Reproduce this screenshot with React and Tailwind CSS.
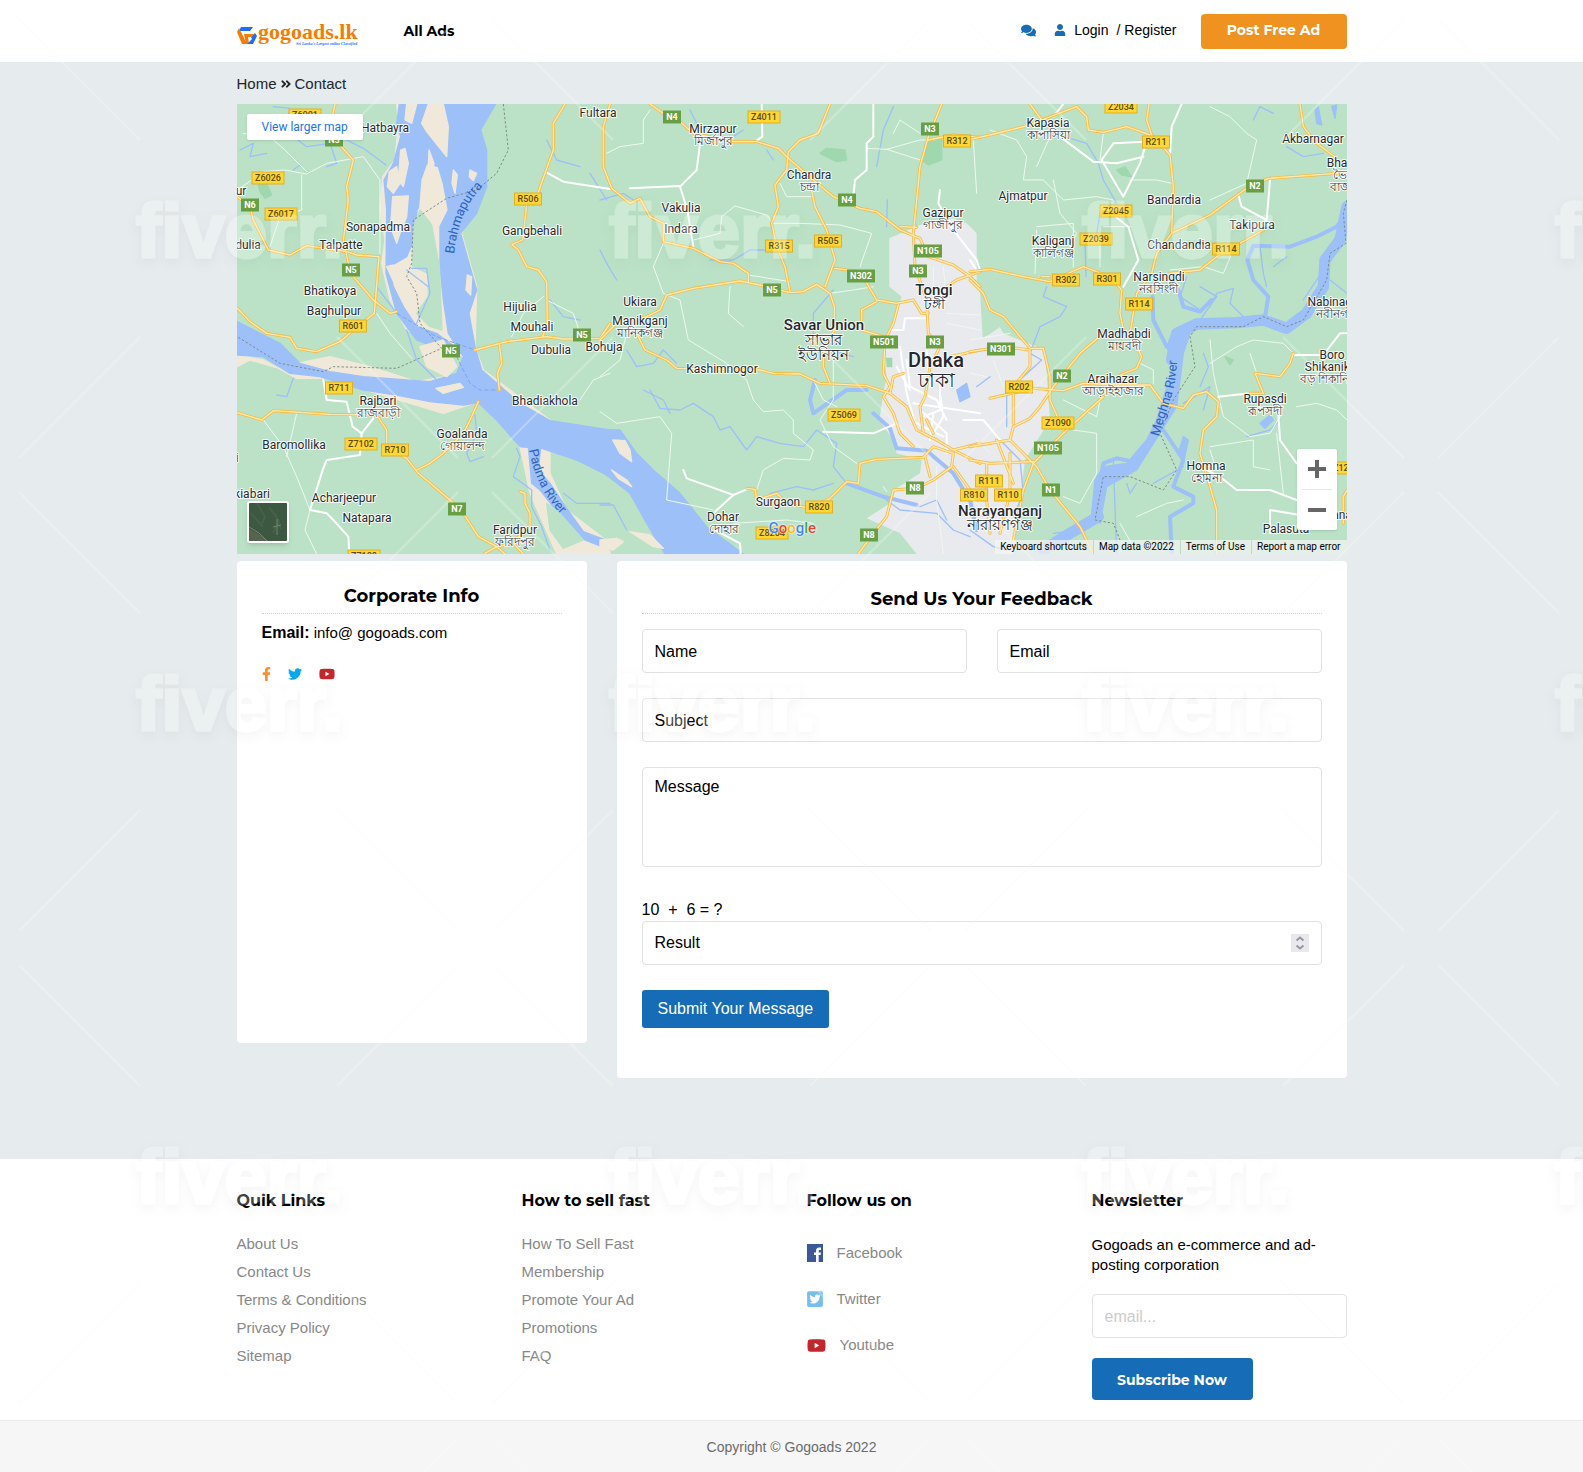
import React from "react";
import {
  FaAngleDoubleRight,
  FaComments,
  FaFacebookF,
  FaTwitter,
  FaTwitterSquare,
  FaUser,
  FaYoutube,
} from "react-icons/fa";

const heading = "font-['Montserrat',Inter,sans-serif]";

/* ---------- Map data: three tiles, each drawn in thirds of a pixel ---------- */

const tiles = [
  {
    id: "west",
    x: -7,
    sand: [
      "M500 12 505 70 495 180 458 230 450 330 465 420 455 490 480 600 530 690 700 770 700 820 560 845 420 800 300 770 200 790 240 820 640 940 760 900 830 980 872 1045 960 1045 960 1120 1010 1230 1140 1330 1140 1362 980 1362 900 1180 870 1040 960 960 760 810 735 740 740 560 695 400 770 250 750 90 795 12Z",
      "M22 765 100 780 200 835 300 835 200 820 60 780 22 800Z",
    ],
    water: [
      "M508 12 500 70 512 110 490 190 462 240 470 330 468 520 500 640 560 720 660 762 700 760 620 700 560 680 520 620 490 560 478 500 530 470 560 400 565 330 572 240 590 190 625 200 640 250 655 330 630 380 630 500 640 600 655 700 700 770 680 820 600 845 400 830 300 815 210 790 150 730 22 665 22 765 100 770 180 820 270 830 400 870 500 885 600 905 700 915 745 908 800 960 870 1040 935 1045 1040 1080 1140 1130 1140 990 960 962 870 910 755 810 735 740 717 640 740 570 720 500 692 400 740 340 770 260 770 150 752 90 797 12Z",
      "M895 1040 932 1042 925 1110 960 1150 1010 1225 1060 1295 1140 1325 1140 1350 1040 1310 985 1240 930 1170 905 1150Z",
    ],
    islands: [
      "M512 150 525 145 535 190 520 260 505 240Z",
      "M478 215 500 200 510 250 490 280 472 260Z",
      "M488 290 535 288 530 350 510 400 500 430 482 380Z",
      "M575 70 595 12 640 12 655 80 650 170 590 95Z",
      "M597 150 612 190 605 225 595 200Z",
      "M612 260 625 250 628 300 615 310Z",
      "M670 210 682 225 675 280 666 250Z",
      "M720 210 740 220 730 242 718 230Z",
      "M712 525 725 530 722 585 708 570Z",
      "M618 865 690 850 700 862 640 880Z",
      "M530 12 560 12 545 70 525 60Z",
      "M565 330 600 300 625 400 600 460 560 400Z",
      "M470 500 490 495 525 560 520 580 505 575Z",
      "M570 740 640 720 680 800 650 830 590 800Z",
    ],
    green: [
      "M570 330 605 375 628 500 636 690 600 680 560 640 595 590 595 520 548 500 550 380Z",
      "M950 1210 990 1240 1060 1320 1000 1345 960 1290Z",
    ],
    park: ["M85 255 110 250 125 285 105 295 90 275Z"],
    streams: [
      "M330 110 400 145 468 195M130 20 180 25 165 90 230 140 300 130 320 190 290 200M30 150 70 130 60 170 110 160M210 195 190 210",
      "M530 510 595 560M545 505 590 505 600 580 560 670M440 560 500 640M530 690 560 780 620 840M860 1045 870 1070 850 1130 905 1170 905 1220 935 1280 960 1350",
      "M735 945 740 1000 710 1060 720 1085 760 1070M960 600 1000 650 1050 660M1080 220 1130 300M950 120 980 180 1050 200M190 835 170 890 140 885M1000 1180 1040 1210 1140 1210",
    ],
    white: [
      "M945 215 1000 245 1140 267M280 840 290 900 350 905 368 980 395 1000 390 1065 290 1080 278 1110 240 1230 290 1240 310 1260 355 1310 358 1362M395 1000 430 955",
    ],
    thin: [
      "M100 960 160 1040 200 1130 240 1230 225 1290 260 1362M22 270 100 215 165 210 230 222 290 190 400 170 450 240 450 460M215 225 215 330 150 350 120 440M230 215 165 150 130 120 40 100M440 640 480 700 545 775M950 600 1030 640 1050 700M1050 900 1090 840 1140 820M940 590 880 640 845 710M170 1070 200 940",
    ],
    roads: [
      "M315 12 305 60 320 125 370 180 350 260 355 300 340 420 355 490 370 530 430 600 480 640 500 635",
      "M22 290 60 320 70 360 115 450 180 465 230 437 350 455 380 465 447 470 433 640 370 690 330 725 260 755 200 745 180 712 110 700 60 665 22 625",
      "M1005 12 970 70 970 150 945 220 920 290 890 315 878 420 845 433 865 450 890 500 925 510 950 545 952 670 938 710",
      "M735 750 830 725 950 710 1000 717 1110 715 1140 670",
      "M808 730 815 790 803 820 808 870",
      "M745 905 720 960 700 1000 640 1060 600 1090 560 1110",
      "M22 938 95 960 130 932 300 943 440 945 470 990 470 1040 530 1075 565 1120 660 1200 700 1240 745 1310 800 1340 825 1362M800 1340 765 1360M800 1340 850 1330 880 1362",
      "M870 1175 885 1180 885 1210 900 1240 900 1290 850 1320",
    ],
    border: [
      "M820 12 835 150 800 220 740 270 650 295 550 360 545 490 530 530 560 580 570 670 635 745 500 805 310 800 280 815 150 790 22 710",
    ],
    ferry: ["M500 640 620 710 735 750M670 750 720 850 750 870 808 870"],
  },
  {
    id: "centre",
    x: 363,
    city: "M868 415 960 375 1060 355 1100 370 1130 400 1130 560 1210 700 1335 750 1350 960 1275 1080 1240 1362 950 1362 900 1300 800 1255 870 1210 890 1165 960 1120 965 1080 890 1060 880 1020 838 960 850 880 860 830 850 760 870 690 905 590 868 560Z",
    green: ["M1140 540 1150 530 1210 620 1240 650 1170 700 1150 710Z"],
    park: ["M985 120 1025 115 1025 180 985 195 965 180Z", "M680 145 735 150 740 180 710 185 660 160Z", "M860 775 875 775 875 800 862 800Z"],
    sand: [],
    water: [
      "M0 990 60 990 110 1060 160 1110 240 1180 320 1280 430 1362 195 1362 140 1270 90 1180 0 1110Z",
      "M1070 870 1100 850 1110 890 1080 905Z",
    ],
    islands: ["M38 1020 75 1022 90 1050 95 1085 60 1060Z", "M35 1110 80 1140 95 1160 55 1135Z", "M90 1295 150 1305 190 1345 160 1340Z", "M0 1320 50 1315 70 1325 40 1350 0 1345Z"],
    streams: [
      "M150 870 180 925 240 930 280 910 340 950 360 990 390 980 440 1050 470 1010 540 1030 610 1040 650 990 710 1030 700 1100 740 1150",
      "M80 750 110 800 160 790 190 750 230 790M130 870 190 900 210 940M0 300 70 280 100 300M270 30 310 110 400 110 430 90M500 150 520 180M0 450 20 490 50 540M330 480 400 480 450 450 500 450M880 20 850 90 830 200M860 380 862 300",
      "M510 1180 590 1160 640 1170 700 1150M760 1160 840 1185 900 1230 1010 1240 1060 1290 1110 1310M960 1220 1010 1200 1040 1260M0 1215 40 1215 80 1290",
      "M700 570 640 640 640 700 690 750 760 770",
    ],
    river: ["M645 840 630 900 640 940 740 870 800 870", "M820 940 870 985 890 1045 980 1052 1060 1120 1110 1200 1130 1290", "M740 1150 850 1190 950 1215"],
    white: [
      "M300 130 290 210 240 260 262 330 280 440M485 12 487 110 470 122M820 12 820 110 800 130 800 210 765 240 760 290M560 170 600 205M1020 270 1015 310 1060 390 1130 480 1140 510M250 1110 260 1135 330 1160 400 1185 440 1168M400 1185 345 1235M345 1290 420 1330 422 1362M90 265 240 258",
      "M870 690 910 690 915 655 980 655M900 740 920 880 950 990M890 800 930 870M920 780 930 860 1010 900 1040 960M960 930 1040 1000 1040 1060M1020 880 1030 950 1000 1000M940 910 1140 940M1090 960 1140 960M970 950 1020 930M950 970 1030 1010M1000 940 990 1020M670 995 820 1000 890 970M1020 850 1020 920M980 750 990 860",
    ],
    thin: [
      "M190 430 160 500 190 580 240 600 265 720 380 790 440 840 460 900 490 935 550 930 580 960 580 1000 640 1050 630 1080 550 1075 490 1110 470 1170M0 935 50 970 180 950 215 1000 200 1200 340 1230M20 160 60 140 130 130 130 60 150 30M280 420 360 400 365 350 405 318 500 345 520 370 600 370 720 375 815 400 780 500M800 145 860 148 960 180M860 148 960 120 1000 120M390 560 385 640 430 680M540 250 560 290 640 290M445 525 570 545M0 830 60 780 80 700M690 580 760 570 820 560M700 750 700 900 660 960 700 1040 770 1090M850 1160 860 1175M400 1270 560 1260 640 1270M960 100 900 60 880 100M1040 640 1140 645M1040 670 1140 690M1000 500 1000 600M1030 500 1040 600M1010 1100 1010 1200 1030 1362M640 840 670 900 710 920",
    ],
    roads: [
      "M30 12 10 80 10 200 35 265 90 310 120 295 150 350 190 370 190 425 280 445 360 485 400 490 445 520 445 545",
      "M0 720 50 670 140 650 180 630 200 585 280 565 420 543 480 555 570 578 610 575 650 553 690 580 703 620 703 690 670 760 670 800 690 850",
      "M150 12 190 40 240 65 280 100 400 125 470 125 535 145 560 170 640 240 700 290 780 325 830 335 900 390 960 415 985 470 1060 495 1110 530 1140 560",
      "M690 12 655 100 600 120 565 155 560 210 525 255 535 320 515 370 530 440 555 500 570 575",
      "M635 270 645 320 680 390 705 480 675 560M705 505 780 515 830 600 890 610 940 600 965 640 985 640",
      "M830 605 785 630 785 690 850 710M895 615 880 670 855 720 850 820 870 860 850 890 880 940 900 1000 940 1040",
      "M110 700 135 750 200 780 230 805 480 810 520 820 600 822 660 850 800 857 870 880 920 920 950 990 1010 1020 1060 1050 1140 1090",
      "M1025 12 985 110 960 200 940 400 945 500 980 600 985 700 1020 740 990 800 975 890 960 920 970 1000 1010 1020M985 120 1060 105 1140 112M900 380 950 382",
      "M440 1165 465 1168 470 1200 530 1180 560 1210 630 1225 690 1195 740 1145 775 1150 780 1090 830 1078 970 1072 1000 1040 1060 1060 1055 1100 1000 1140 950 1165 880 1170 860 1250 820 1300 775 1362",
      "M975 1070 990 1130M1060 1100 1110 1170M1060 1050 1140 1030M1040 560 1070 540 1140 515M1050 770 1140 750M870 880 880 830 910 820M980 960 1000 1000",
    ],
    border: [],
    ferry: [],
  },
  {
    id: "east",
    x: 733,
    sand: [],
    park: ["M440 210 465 200 485 230 455 225Z", "M765 770 790 780 780 795Z"],
    water: ["M1035 30 1045 20 1055 75 1040 70ZM1085 20 1100 15 1095 55ZM870 970 900 945 910 960 885 985ZM640 1010 655 1020 640 1090 625 1060Z", "M610 690 590 740 612 790 560 960 530 1020 470 1090 400 1100 375 1140 365 1240 390 1270 410 1160 500 1110 620 920 640 760 660 700Z"],
    islands: [],
    big: [
      "M1131 320 1110 420 1065 480 1060 560 1010 640 950 685 880 660 800 668 680 672 620 700 605 780",
      "M385 1250 300 1300 220 1350",
    ],
    river: [
      "M1131 340 1100 380 1040 410 960 440 850 437 832 480 850 540 895 590 885 650",
      "M548 590 550 660 590 740M625 570 640 620 690 635 725 600",
      "M395 1120 400 1090 440 1075 490 1085M580 990 640 1080 610 1160 670 1190 670 1210 600 1250 605 1362",
    ],
    streams: [
      "M250 100 350 130 385 190 400 240 440 310 390 340 380 400 345 420 348 530M230 560 220 590 290 620 270 650 210 680 180 760 215 780 160 830 110 870 110 980M650 530 630 590 690 630M1080 540 1131 580M720 620 740 580 790 565 780 610 830 660M690 660 740 590 690 560M640 910 720 860 700 930M1000 600 1060 510M850 60 870 20 910 40M950 140 1000 170 1060 160M870 440 880 520 890 560M910 500 950 470M550 1150 640 1100M470 1150 480 1180 500 1150M830 1010 900 990 930 960M700 760 715 800 690 860M430 1080 440 1362M250 1300 330 1290 370 1362",
      "M90 1020 150 1080 160 1180 130 1250M0 1290 70 1340 110 1350M20 860 60 830",
    ],
    white: [
      "M600 165 605 80 635 12M270 110 370 185 440 190 520 170M525 125 430 130 395 180 460 290 510 190 530 125M430 345 475 380 505 480 460 560M805 285 815 320 890 360 900 240M970 765 1060 765 1110 700 1131 700M690 1100 750 1130 800 1170 900 1170 980 1200M925 940 930 1020 980 1090M745 890 840 880M900 1300 900 1230 990 1245M0 960 40 960 90 1020M0 480 20 510M250 50 280 12",
    ],
    thin: [
      "M60 90 140 120 170 170 160 240 220 240 280 300 380 290 430 300M250 240 270 340 320 400 300 440M400 100 390 180M240 110 200 200M480 240 560 240 605 250M720 20 780 50 830 100 860 120 830 250 720 300M200 380 310 370 310 500M200 390 195 520M390 400 390 500M400 380 480 380M600 510 700 500 760 520 790 450M720 720 730 820 760 950 840 1010 900 1000 930 950M720 790 800 740 850 720 940 730 970 760M840 760 860 820M720 1040 850 1020 850 1100 900 1110M720 1050 740 1110M980 920 1040 910 1100 930 1131 960M920 1000 940 1180M280 900 380 950 390 900M500 1250 590 1210 640 1200M450 1270 490 1340M310 990 380 1000 380 1120 330 1210 280 1190M510 790 550 810 550 850",
      "M10 120 20 280M0 720 120 700M20 1020 60 1060M70 780 100 860M0 820 50 830",
    ],
    roads: [
      "M0 118 60 105 180 75 215 60 180 12M215 60 320 20 350 50 355 90 400 97 470 80 540 105",
      "M537 12 530 60 545 105 600 165 610 260 605 400 560 460 545 520 500 580 480 700",
      "M605 400 720 345 830 265 895 235 1131 218M990 12 1000 80 1040 130 1100 175",
      "M480 700 515 770 500 805 450 825 440 855 540 855 580 910 640 925 670 885 710 875 745 905 740 950 700 990 690 1060 720 1160 740 1230 740 1362",
      "M880 390 740 470 690 510 600 520M0 515 60 508 160 530 240 545 340 500 420 530 455 570 450 640 460 690",
      "M400 700 330 760 250 860 210 920 180 955 130 980 120 1020 200 1100 240 1170 330 1280 370 1362",
      "M0 540 40 580 60 630 100 650 180 745 220 745 240 830 240 900 280 990M0 755 100 740 180 750 180 800 130 860 130 970",
      "M400 890 280 1000 190 1090 160 1170 130 1320M60 895 190 865 280 872 340 850 440 855",
      "M0 1040 120 1020M0 1080 60 1090 190 1085M50 1090 50 1200 60 1300M120 1060 120 1180 90 1300M80 1020 130 1150M1120 1270 1120 1190 1131 1170",
      "M970 760 960 790 930 830 855 820 880 880 840 880M215 530 240 530",
    ],
    border: [
      "M1131 300 1120 340 1128 430 1080 460 1070 540 1000 660 950 680 880 650 820 680 680 680 660 710 675 800 610 900 570 1000 620 1110 580 1170 480 1130 400 1130 375 1260 430 1270 450 1320",
    ],
    ferry: [],
  },
];

/* Each label: tile index, centre x, centre y, text */
const places = [
  [0, 466, 84, "Hatbayra"],
  [0, 32, 273, "ur"],
  [0, 54, 435, "dulia"],
  [0, 443, 381, "Sonapadma"],
  [0, 334, 435, "Talpatte"],
  [0, 301, 573, "Bhatikoya"],
  [0, 312, 633, "Baghulpur"],
  [0, 905, 393, "Gangbehali"],
  [0, 871, 621, "Hijulia"],
  [0, 907, 681, "Mouhali"],
  [0, 962, 750, "Dubulia"],
  [0, 1122, 742, "Bohuja"],
  [0, 944, 903, "Bhadiakhola"],
  [0, 445, 903, "Rajbari"],
  [0, 697, 1002, "Goalanda"],
  [0, 191, 1035, "Baromollika"],
  [0, 65, 1182, "kiabari"],
  [0, 22, 1075, "i"],
  [0, 343, 1194, "Acharjeepur"],
  [0, 410, 1254, "Natapara"],
  [0, 855, 1290, "Faridpur"],
  [0, 1104, 39, "Fultara"],
  [1, 338, 87, "Mirzapur"],
  [1, 628, 225, "Chandra"],
  [1, 242, 324, "Vakulia"],
  [1, 242, 387, "Indara"],
  [1, 1028, 339, "Gazipur"],
  [1, 119, 606, "Ukiara"],
  [1, 119, 663, "Manikganj"],
  [1, 365, 807, "Kashimnogor"],
  [1, 534, 1206, "Surgaon"],
  [1, 368, 1251, "Dohar"],
  [2, 235, 69, "Kapasia"],
  [2, 1028, 117, "Akbarnagar"],
  [2, 160, 288, "Ajmatpur"],
  [2, 612, 300, "Bandardia"],
  [2, 847, 375, "Takipura"],
  [2, 250, 423, "Kaliganj"],
  [2, 626, 435, "Chandandia"],
  [2, 566, 531, "Narsingdi"],
  [2, 461, 702, "Madhabdi"],
  [2, 428, 837, "Araihazar"],
  [2, 884, 897, "Rupasdi"],
  [2, 709, 1098, "Homna"],
  [2, 1085, 765, "Boro"],
  [2, 1092, 801, "Shikanikati"],
  [2, 1095, 606, "Nabinagar"],
  [2, 1131, 189, "Bhairab"],
  [2, 949, 1287, "Palasuta"],
  [2, 1115, 1245, "ana"],
];

const localNames = [
  [0, 445, 938, "রাজবাড়ী"],
  [0, 697, 1038, "গোয়ালন্দ"],
  [0, 855, 1326, "ফরিদপুর"],
  [1, 338, 123, "মির্জাপুর"],
  [1, 628, 261, "চন্দ্রা"],
  [1, 1028, 375, "গাজীপুর"],
  [1, 119, 698, "মানিকগঞ্জ"],
  [1, 371, 1286, "দোহার"],
  [2, 235, 104, "কাপাসিয়া"],
  [2, 250, 459, "কালিগঞ্জ"],
  [2, 564, 566, "নরসিংদী"],
  [2, 461, 738, "মাধবদী"],
  [2, 428, 873, "আড়াইহাজার"],
  [2, 884, 933, "রূপসদী"],
  [2, 709, 1134, "হোমনা"],
  [2, 1096, 836, "বড় শিকানিকাটি"],
  [2, 1095, 642, "নবীনগর"],
  [2, 1131, 226, "ভৈরব"],
  [2, 1124, 262, "বাজার"],
];

const shields = [
  [0, 225, 46, "Z6001"],
  [0, 311, 120, "N5"],
  [0, 113, 234, "Z6026"],
  [0, 59, 316, "N6"],
  [0, 152, 342, "Z6017"],
  [0, 364, 511, "N5"],
  [0, 370, 678, "R601"],
  [0, 663, 753, "N5"],
  [0, 894, 297, "R506"],
  [0, 1055, 705, "N5"],
  [0, 328, 864, "R711"],
  [0, 393, 1032, "Z7102"],
  [0, 495, 1050, "R710"],
  [0, 680, 1226, "N7"],
  [0, 401, 1368, "Z7108"],
  [1, 215, 52, "N4"],
  [1, 491, 51, "Z4011"],
  [1, 991, 86, "N3"],
  [1, 1072, 123, "R312"],
  [1, 742, 301, "N4"],
  [1, 538, 438, "R315"],
  [1, 684, 423, "R505"],
  [1, 984, 453, "N105"],
  [1, 953, 514, "N3"],
  [1, 782, 527, "N302"],
  [1, 517, 570, "N5"],
  [1, 851, 725, "N501"],
  [1, 1006, 725, "N3"],
  [1, 731, 945, "Z5069"],
  [1, 946, 1163, "N8"],
  [1, 657, 1221, "R820"],
  [1, 515, 1300, "Z8204"],
  [1, 808, 1304, "N8"],
  [2, 452, 20, "Z2034"],
  [2, 559, 126, "R211"],
  [2, 856, 258, "N2"],
  [2, 437, 333, "Z2045"],
  [2, 378, 417, "Z2039"],
  [2, 769, 447, "R114"],
  [2, 289, 540, "R302"],
  [2, 411, 538, "R301"],
  [2, 507, 612, "R114"],
  [2, 92, 747, "N301"],
  [2, 275, 829, "N2"],
  [2, 148, 861, "R202"],
  [2, 263, 969, "Z1090"],
  [2, 234, 1045, "N105"],
  [2, 57, 1143, "R111"],
  [2, 13, 1185, "R810"],
  [2, 115, 1185, "R110"],
  [2, 242, 1171, "N1"],
  [2, 1127, 1104, "Z1210"],
];

const mapX = (tile, x) => Math.round(x / 3 + tiles[tile].x);
const mapY = (y) => Math.round(y / 3 - 4);

function Strokes({ paths, color, width, dash }) {
  return (paths || []).map((d) => (
    <path key={d} d={d} fill="none" stroke={color} strokeWidth={width} strokeDasharray={dash} strokeLinejoin="round" strokeLinecap={dash ? "butt" : "round"} />
  ));
}

function Areas({ paths, color }) {
  return (paths || []).map((d) => <path key={d} d={d} fill={color} stroke={color} strokeWidth="4" strokeLinejoin="round" />);
}

function Layer({ children }) {
  return tiles.map((t) => (
    <g key={t.id} transform={`translate(${t.x} -4) scale(0.33333)`}>
      {children(t)}
    </g>
  ));
}

function Label({ x, y, size, weight = 400, children, color = "#26292c" }) {
  return (
    <text x={x} y={y + Math.round(size * 0.35)} textAnchor="middle" fontSize={size} fontWeight={weight} fill={color} stroke="#fff" strokeWidth="2" strokeOpacity="0.9" strokeLinejoin="round" paintOrder="stroke">
      {children}
    </text>
  );
}

function Shield({ x, y, name }) {
  const w = 7 + name.length * 5;
  const national = name[0] === "N";
  return (
    <g>
      <rect x={x - w / 2} y={y - 6} width={w} height="12" fill={national ? "#689f43" : "#fdd835"} stroke={national ? "#689f43" : "#e3ae22"} strokeWidth="1" />
      <text x={x} y={y + 3} textAnchor="middle" fontSize="9" fontWeight={national ? 700 : 500} fill={national ? "#fff" : "#5b4a12"}>
        {name}
      </text>
    </g>
  );
}

function MapDrawing() {
  return (
    <svg viewBox="0 0 1110 450" preserveAspectRatio="xMidYMid slice" className="block h-full w-full font-[Roboto,sans-serif]" role="img" aria-label="Map of Dhaka and its surroundings">
      <rect width="1110" height="450" fill="#bbe2c6" />
      <Layer>
        {(t) => (
          <>
            {t.city && <path d={t.city} fill="#e8eaed" />}
            <Areas paths={t.sand} color="#f0e9d9" />
            <Areas paths={t.water} color="#9dc0f9" />
            <Strokes paths={t.big} color="#9dc0f9" width="34" />
            <Strokes paths={t.river} color="#9dc0f9" width="12" />
            <Areas paths={t.islands} color="#f0e9d9" />
            <Areas paths={t.green} color="#bbe2c6" />
            <Areas paths={t.park} color="#9fd7ae" />
            <Strokes paths={t.streams} color="#9dc0f9" width="4" />
            <Strokes paths={t.border} color="#7d8a86" width="3" dash="7 6" />
            <Strokes paths={t.ferry} color="#79a5ee" width="3" dash="14 6" />
          </>
        )}
      </Layer>
      <Layer>
        {(t) => (
          <>
            <Strokes paths={t.thin} color="#eef8f0" width="3" />
            <Strokes paths={t.white} color="#ffffff" width="6" />
            <Strokes paths={t.roads} color="#f6bc45" width="9" />
            <Strokes paths={t.roads} color="#fdeab0" width="4" />
          </>
        )}
      </Layer>

      <defs>
        <path id="brahmaputra" d="M217 150 C221 118 229 98 250 78" />
        <path id="padma" d="M292 346 C297 372 307 396 334 420" />
        <path id="meghna" d="M922 333 C930 300 940 290 940 248" />
      </defs>
      <g fontSize="13" fill="#2a62c4">
        <text><textPath href="#brahmaputra">Brahmaputra</textPath></text>
        <text><textPath href="#padma">Padma River</textPath></text>
        <text><textPath href="#meghna">Meghna River</textPath></text>
      </g>

      {places.map(([t, x, y, name]) => (
        <Label key={name + x} x={mapX(t, x)} y={mapY(y)} size={12}>{name}</Label>
      ))}
      {localNames.map(([t, x, y, name]) => (
        <Label key={name} x={mapX(t, x)} y={mapY(y)} size={12} color="#3c4043">{name}</Label>
      ))}
      {shields.map(([t, x, y, name]) => (
        <Shield key={name + t + x} x={mapX(t, x)} y={mapY(y)} name={name} />
      ))}
      <Label x={697} y={186} size={15} weight={500}>Tongi</Label>
      <Label x={697} y={200} size={14}>টঙ্গী</Label>
      <Label x={587} y={221} size={15} weight={500}>Savar Union</Label>
      <Label x={586} y={236} size={15}>সাভার</Label>
      <Label x={586} y={251} size={15}>ইউনিয়ন</Label>
      <Label x={699} y={256} size={20} weight={500}>Dhaka</Label>
      <Label x={699} y={276} size={20}>ঢাকা</Label>
      <Label x={763} y={407} size={15} weight={500}>Narayanganj</Label>
      <Label x={763} y={421} size={15}>নারায়ণগঞ্জ</Label>
    </svg>
  );
}

function MapPanel() {
  return (
    <section className="relative h-[450px] overflow-hidden" aria-label="Location map">
      <MapDrawing />
      <a href="#map" className="absolute top-[10px] left-[10px] rounded-[2px] bg-white px-[15px] font-[Roboto,sans-serif] text-[12px] leading-[26px] text-[#1a73e8] shadow">
        View larger map
      </a>
      <button type="button" aria-label="Show satellite imagery" className="absolute bottom-[11px] left-[10px] size-[42px] overflow-hidden rounded-[3px] border-2 border-white shadow-md">
        <svg viewBox="0 0 38 38" className="block size-full" aria-hidden="true">
          <rect width="38" height="38" fill="#3c5840" />
          <path d="M0 26 8 30 20 38H0Z" fill="#56634f" />
          <path d="M8 0 16 14 12 22M20 4 30 18 24 30M26 10 32 26M2 10 14 24" stroke="#4c6650" strokeWidth="2" fill="none" opacity=".6" />
          <path d="M0 24 10 30 18 38M28 16 28 32M24 24 32 22" stroke="#77836c" strokeWidth="1" fill="none" />
        </svg>
      </button>
      <p className="absolute top-[414px] left-1/2 -ml-[23px] font-[Roboto,sans-serif] text-[15px] leading-5 font-medium [text-shadow:0_0_2px_#fff,0_0_2px_#fff]">
        <span className="text-[#4285f4]">G</span>
        <span className="text-[#ea4335]">o</span>
        <span className="text-[#fbbc05]">o</span>
        <span className="text-[#4285f4]">g</span>
        <span className="text-[#34a853]">l</span>
        <span className="text-[#ea4335]">e</span>
      </p>
      <div className="absolute right-[10px] bottom-6 flex w-10 flex-col items-center rounded-[2px] bg-white shadow">
        <button type="button" aria-label="Zoom in" className="flex h-10 w-full items-center justify-center">
          <svg viewBox="0 0 18 18" className="size-[18px]" aria-hidden="true"><path d="M7 0h4v7h7v4h-7v7H7v-7H0V7h7z" fill="#666" /></svg>
        </button>
        <span className="h-px w-[30px] bg-[#e6e6e6]" />
        <button type="button" aria-label="Zoom out" className="flex h-10 w-full items-center justify-center">
          <svg viewBox="0 0 18 18" className="size-[18px]" aria-hidden="true"><path d="M0 7h18v4H0z" fill="#666" /></svg>
        </button>
      </div>
      <div className="absolute right-0 bottom-0 flex divide-x divide-[#bbdcc6] bg-[#f5f5f5]/70 font-[Roboto,sans-serif] text-[10px] leading-[14px] text-black">
        <button type="button" className="pr-[6px] pl-[5px]">Keyboard shortcuts</button>
        <span className="pr-[6px] pl-[5px]">Map data ©2022</span>
        <a href="#terms" className="pr-[6px] pl-[5px]">Terms of Use</a>
        <a href="#report" className="pr-[6px] pl-[5px]">Report a map error</a>
      </div>
    </section>
  );
}

/* ---------- Page pieces ---------- */

function Container({ className = "", children }) {
  return <div className={`mx-auto w-full max-w-[1140px] px-[15px] ${className}`}>{children}</div>;
}

function Logo() {
  return (
    <a href="#home" aria-label="gogoads.lk" className="flex w-[121px] items-center pt-2">
      <svg viewBox="0 0 121 26" className="h-[26px] w-[121px]" aria-hidden="true">
        <path d="M4 5H16L13 9H2Z" fill="#1a6dff" />
        <path d="M2 6 4 10 10 22H5L0 10Z" fill="#f57c00" />
        <path d="M7 12H17L14 15H11L12 22H9Z" fill="#f57c00" />
        <path d="M14 15 18 11 20 14 16 22H10L15 17Z" fill="#1a6dff" />
        <text x="21" y="17" fontFamily="Liberation Serif, serif" fontWeight="700" fontSize="22" fill="#f57c00">gogoads.lk</text>
        <text x="59" y="23" fontFamily="Liberation Serif, serif" fontStyle="italic" fontWeight="700" fontSize="4" fill="#2a74ff">Sri Lanka's Largest online Classified</text>
      </svg>
    </a>
  );
}

function Header() {
  return (
    <header className="bg-white">
      <Container className="flex h-[62px] items-center">
        <Logo />
        <nav className="ml-[46px]">
          <a href="#ads" className={`${heading} text-[14px] font-bold text-black`}>All Ads</a>
        </nav>
        <div className="ml-auto flex items-center text-[14px] text-black">
          <div className="flex items-center pb-[2px]">
            <a href="#messages" aria-label="Messages"><FaComments className="size-[15px] text-[#166cb6]" /></a>
            <FaUser className="ml-[18px] size-[12px] text-[#166cb6]" aria-hidden="true" />
            <a href="#login" className="ml-2">Login</a>
            <span className="ml-2">/</span>
            <a href="#register" className="ml-1">Register</a>
          </div>
          <a href="#post" className={`${heading} ml-6 flex h-[35px] w-[146px] items-center justify-center rounded-[4px] bg-[#ef9220] pb-[2px] font-bold text-white`}>
            Post Free Ad
          </a>
        </div>
      </Container>
    </header>
  );
}

const field = "w-full rounded-[4px] border border-[#dfe1e3] bg-white px-3 text-[16px] text-black placeholder:text-black placeholder:opacity-100";

function CorporateInfo() {
  return (
    <section className="h-[482px] w-[350px] shrink-0 rounded-[4px] bg-white px-[25px] pt-[23px]">
      <h2 className={`${heading} border-b border-dotted border-[#cfcfcf] pb-1 text-center text-[18px] leading-[25px] font-bold text-black`}>Corporate Info</h2>
      <p className="mt-[7px] text-[15px] leading-6 text-black">
        <strong className="text-[16px]">Email:</strong> info@ gogoads.com
      </p>
      <div className="mt-[21px] flex items-center">
        <a href="#facebook" aria-label="Facebook"><FaFacebookF className="h-[14px] w-[9px] text-[#f9922b]" /></a>
        <a href="#twitter" aria-label="Twitter" className="ml-[17px]"><FaTwitter className="size-[14px] text-[#04a9f0]" /></a>
        <a href="#youtube" aria-label="Youtube" className="ml-[17px]"><FaYoutube className="size-4 text-[#c4262e]" /></a>
      </div>
    </section>
  );
}

function FeedbackForm() {
  return (
    <section className="min-w-0 flex-1 rounded-[4px] bg-white px-[25px] pt-[26px] pb-[50px]">
      <h2 className={`${heading} border-b border-dotted border-[#cfcfcf] pb-px text-center text-[18px] leading-[25px] font-bold text-black`}>Send Us Your Feedback</h2>
      <form className="mt-[15px]" onSubmit={(e) => e.preventDefault()}>
        <div className="grid grid-cols-2 gap-[30px]">
          <input aria-label="Name" placeholder="Name" className={`${field} h-11 pt-[2px]`} />
          <input aria-label="Email" type="email" placeholder="Email" className={`${field} h-11 pt-[2px]`} />
        </div>
        <input aria-label="Subject" placeholder="Subject" className={`${field} mt-[25px] h-11 pt-[2px]`} />
        <textarea aria-label="Message" placeholder="Message" className={`${field} mt-[25px] block h-[100px] resize-none py-[7px] leading-6`} />
        <label htmlFor="result" className="mt-[31px] block text-[16px] leading-[23px] whitespace-pre text-black">10  +  6 = ?</label>
        <div className={`${field} flex h-11 items-center`}>
          <input id="result" type="number" placeholder="Result" className="min-w-0 flex-1 appearance-none outline-none [-moz-appearance:textfield] placeholder:text-black placeholder:opacity-100 [&::-webkit-inner-spin-button]:appearance-none" />
          <span className="flex size-[18px] items-center justify-center bg-[#e9e8ed]" aria-hidden="true">
            <svg viewBox="0 0 18 18" className="size-[18px]"><path d="M5.500 6.500 9 3.500 12.500 6.500M5.500 11.500 9 14.500 12.500 11.500" fill="none" stroke="#96959f" strokeWidth="1.800" /></svg>
          </span>
        </div>
        <button type="submit" className="mt-[25px] block h-[38px] rounded-[3px] bg-[#166cb6] px-4 text-[16px] text-white">Submit Your Message</button>
      </form>
    </section>
  );
}

function LinkColumn({ title, links }) {
  return (
    <nav aria-label={title}>
      <h3 className={`${heading} text-[16px] leading-5 font-bold text-black`}>{title}</h3>
      <ul className="mt-[19px] text-[15px] leading-7 text-[#888]">
        {links.map((l) => (
          <li key={l}><a href="#link">{l}</a></li>
        ))}
      </ul>
    </nav>
  );
}

function FacebookTile() {
  return (
    <svg viewBox="0 0 16 18" className="h-[18px] w-4" aria-hidden="true">
      <rect width="16" height="18" fill="#3b5998" />
      <path d="M9 18V11H7V8.500H9V7C9 4.800 10.200 3.500 12.200 3.500H14V6H12.800C12 6 11.700 6.400 11.700 7.200V8.500H14L13.600 11H11.700V18Z" fill="#fff" />
    </svg>
  );
}

function Footer() {
  return (
    <footer>
      <div className="bg-white">
        <Container className="grid grid-cols-4 gap-[30px] pt-8 pb-5">
          <LinkColumn title="Quik Links" links={["About Us", "Contact Us", "Terms & Conditions", "Privacy Policy", "Sitemap"]} />
          <LinkColumn title="How to sell fast" links={["How To Sell Fast", "Membership", "Promote Your Ad", "Promotions", "FAQ"]} />
          <div>
            <h3 className={`${heading} text-[16px] leading-5 font-bold text-black`}>Follow us on</h3>
            <ul className="mt-[19px] text-[15px] leading-[46px] text-[#888]">
              <li><a href="#facebook" className="flex items-center gap-[14px]"><FacebookTile />Facebook</a></li>
              <li><a href="#twitter" className="flex items-center gap-[14px]"><FaTwitterSquare className="-mx-px size-[18px] text-[#76bef1]" />Twitter</a></li>
              <li><a href="#youtube" className="flex items-center gap-[14px]"><FaYoutube className="size-[19px] text-[#c4262e]" />Youtube</a></li>
            </ul>
          </div>
          <form onSubmit={(e) => e.preventDefault()}>
            <h3 className={`${heading} text-[16px] leading-5 font-bold text-black`}>Newsletter</h3>
            <p className="mt-6 text-[15px] leading-5 text-black">Gogoads an e-commerce and ad-posting corporation</p>
            <input aria-label="Newsletter email" type="email" placeholder="email..." className="mt-[19px] block h-11 w-full rounded-[4px] border border-[#dfe1e3] px-3 pt-[2px] text-[16px] placeholder:text-[#ccc] placeholder:opacity-100" />
            <button type="submit" className={`${heading} mt-5 block h-[42px] w-[161px] rounded-[4px] bg-[#166cb6] pt-[2px] text-[14px] font-bold text-white`}>Subscribe Now</button>
          </form>
        </Container>
      </div>
      <p className="border-t border-[#e9e9e9] bg-[#f6f6f6] pt-[14px] pb-[13px] text-center text-[14px] leading-6 text-[#6b6b6b]">Copyright © Gogoads 2022</p>
    </footer>
  );
}

/* Repeating brand mark with diagonal rules, laid over the whole page */
function Watermark() {
  return (
    <svg className="pointer-events-none absolute inset-0 h-full w-full" aria-hidden="true">
      <defs>
        <filter id="soft" x="-20%" y="-20%" width="140%" height="160%">
          <feDropShadow dx="0" dy="4" stdDeviation="5" floodColor="#000" floodOpacity="0.14" />
        </filter>
        <pattern id="mark" x="2" y="2" width="473" height="473" patternUnits="userSpaceOnUse">
          <path d="M17 17 138 138M456 17 335 138M17 456 138 335M456 456 335 335" stroke="#f6f8f4" strokeOpacity="0.28" strokeWidth="2" />
          <text x="134" y="255" fontFamily="Liberation Sans, sans-serif" fontWeight="700" fontSize="76" fill="#fbfdf9" stroke="#fbfdf9" strokeWidth="3" opacity="0.26" filter="url(#soft)">fiverr.</text>
        </pattern>
      </defs>
      <rect width="100%" height="100%" fill="url(#mark)" />
    </svg>
  );
}

export default function App() {
  return (
    <div className="relative min-h-screen bg-[#e6ebee] font-['Liberation_Sans',Arial,sans-serif]">
      <Header />
      <main>
        <Container className="pb-[81px]">
          <nav aria-label="Breadcrumb" className="flex h-[42px] items-center pt-[2px] text-[15px] text-[#212529]">
            <a href="#home">Home</a>
            <FaAngleDoubleRight className="mx-[3px] size-[12px]" aria-hidden="true" />
            <span>Contact</span>
          </nav>
          <MapPanel />
          <div className="mt-[7px] flex items-start gap-[30px]">
            <CorporateInfo />
            <FeedbackForm />
          </div>
        </Container>
      </main>
      <Footer />
      <Watermark />
    </div>
  );
}
